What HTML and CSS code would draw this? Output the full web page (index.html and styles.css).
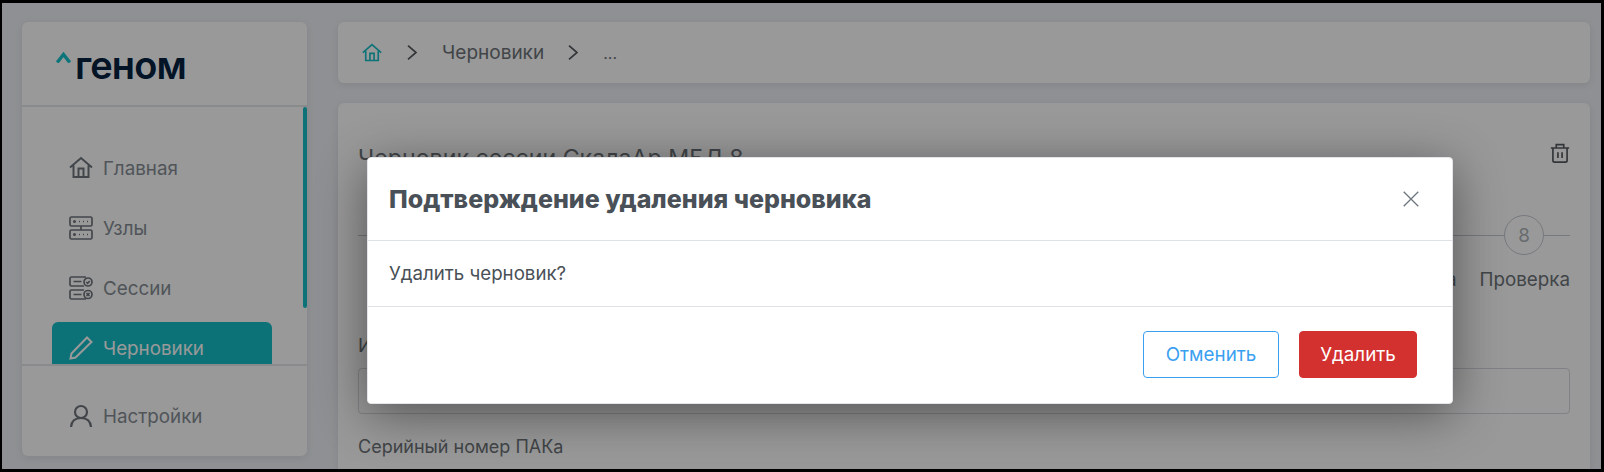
FILE: index.html
```html
<!DOCTYPE html>
<html lang="ru">
<head>
<meta charset="utf-8">
<title>Черновики</title>
<link rel="stylesheet" href="styles.css">
</head>
<body>
<div class="frame">
  <div class="app">
    <aside class="sidebar">
      <div class="logo">
        <svg class="logo-mark" width="15" height="11" viewBox="0 0 15 11"><path d="M1.200 10.500 7.500 2.500 13.800 10.500" fill="none" stroke="#17c4cc" stroke-width="3.400"/></svg>
        <span class="logo-text">геном</span>
      </div>
      <div class="nav-scroll">
        <nav class="nav">
          <a class="nav-item">
            <svg class="nav-icon" viewBox="0 0 24 24" fill="none" stroke="currentColor" stroke-width="2"><path d="M1 11.500 12 2l11 9.500M4.500 9.500v11.500h15V9.500M9.500 21v-8.500h5V21"/></svg>
            <span>Главная</span>
          </a>
          <a class="nav-item">
            <svg class="nav-icon" viewBox="0 0 24 24" fill="none" stroke="currentColor" stroke-width="1.700"><rect x="1" y="1" width="22" height="9" rx="1.500"/><rect x="1" y="14" width="22" height="9" rx="1.500"/><path d="M12 10v4"/><circle cx="5.500" cy="5.500" r="1.500" fill="currentColor" stroke="none"/><circle cx="5.500" cy="18.500" r="1.500" fill="currentColor" stroke="none"/><path d="M10 5.500h1M14 5.500h1M18 5.500h1M10 18.500h1M14 18.500h1M18 18.500h1"/></svg>
            <span>Узлы</span>
          </a>
          <a class="nav-item">
            <svg class="nav-icon" viewBox="0 0 24 24" fill="none" stroke="currentColor" stroke-width="1.700"><path d="M17 1H2.500A1.500 1.500 0 0 0 1 2.500v6A1.500 1.500 0 0 0 2.500 10H15M15 14H2.500A1.500 1.500 0 0 0 1 15.500v6A1.500 1.500 0 0 0 2.500 23H17M4.500 5.500h8M4.500 18.500h8"/><circle cx="19" cy="6" r="4"/><circle cx="19" cy="18.500" r="4"/><path d="m17.300 6 1.300 1.300 2.200-2.300M17.500 17l3 3M20.500 17l-3 3"/></svg>
            <span>Сессии</span>
          </a>
          <a class="nav-item active">
            <svg class="nav-icon" viewBox="0 0 24 24" fill="none" stroke="currentColor" stroke-width="2"><path d="M18 1.500 22.500 6 6.500 21.500 1.500 22.500 2.500 17.500Z"/></svg>
            <span>Черновики</span>
          </a>
        </nav>
        <div class="scrollbar"></div>
      </div>
      <div class="side-footer">
        <a class="nav-item">
          <svg class="nav-icon" viewBox="0 0 24 24" fill="none" stroke="currentColor" stroke-width="2.200"><circle cx="12" cy="8" r="6"/><path d="M2 23c.5-6 4-9 10-9s9.500 3 10 9"/></svg>
          <span>Настройки</span>
        </a>
      </div>
    </aside>
    <main class="content">
      <div class="crumbs">
        <svg class="crumb-home" viewBox="0 0 24 24" fill="none" stroke="currentColor" stroke-width="2"><path d="M1 11.500 12 2l11 9.500M4.500 9.500v11.500h15V9.500M9.500 21v-8.500h5V21"/></svg>
        <svg class="crumb-sep" viewBox="0 0 10 15" fill="none" stroke="currentColor" stroke-width="1.700"><path d="m1 .7 8 6.800-8 6.800"/></svg>
        <span>Черновики</span>
        <svg class="crumb-sep" viewBox="0 0 10 15" fill="none" stroke="currentColor" stroke-width="1.700"><path d="m1 .7 8 6.800-8 6.800"/></svg>
        <span class="crumb-dots">...</span>
      </div>
      <section class="card">
        <div class="card-head">
          <h1 class="card-title">Черновик сессии СкалаАр МБД.8</h1>
          <svg class="trash" viewBox="0 0 24 24" fill="none" stroke="currentColor" stroke-width="2"><path d="M1 6h22M7.500 6V2h9v4M3.500 6v15a2 2 0 0 0 2 2h13a2 2 0 0 0 2-2V6M9.500 11v7M14.500 11v7"/></svg>
        </div>
        <div class="stepper">
          <div class="step-line"></div>
          <div class="step-circle">8</div>
          <div class="step-end"></div>
        </div>
        <div class="step-labels"><span>Настройка</span><span>Проверка</span></div>
        <label class="field-label">Имя сессии</label>
        <div class="input"></div>
        <label class="field-label serial">Серийный номер ПАКа</label>
      </section>
    </main>
  </div>
  <div class="overlay"></div>
  <div class="modal">
    <div class="modal-head">
      <h2 class="modal-title">Подтверждение удаления черновика</h2>
      <svg class="close" viewBox="0 0 16 16" fill="none" stroke="currentColor" stroke-width="1.300"><path d="m.7.700 14.600 14.600M15.300.700.7 15.300"/></svg>
    </div>
    <div class="modal-body">Удалить черновик?</div>
    <div class="modal-foot">
      <button class="btn btn-cancel">Отменить</button>
      <button class="btn btn-delete">Удалить</button>
    </div>
  </div>
</div>
</body>
</html>
```
FILE: styles.css
```css
* { box-sizing: border-box; }
html, body { margin: 0; height: 100%; }
body { background: #000; font-family: Inter, "Noto Sans", sans-serif; overflow: hidden; }

.frame {
  position: relative;
  width: 1604px;
  height: 472px;
  border: solid #000;
  border-width: 3px 3px 3px 2px;
  overflow: hidden;
  background: #eff1f5;
}

.app {
  display: flex;
  gap: 31px;
  padding: 19px 11px 0 20px;
  height: 100%;
}

.sidebar {
  flex: 0 0 285px;
  height: 434px;
  display: flex;
  flex-direction: column;
  background: #fff;
  border-radius: 6px;
  box-shadow: 0 2px 8px rgba(60, 70, 90, .12);
  overflow: hidden;
}

.logo {
  flex: 0 0 85px;
  display: flex;
  align-items: flex-start;
  gap: 4px;
  padding: 23px 0 0 34px;
  border-bottom: 2px solid #e4e6ea;
}
.logo-mark { margin-top: 7px; }
.logo-text {
  font-family: Inter, sans-serif;
  font-weight: 600;
  font-size: 38px;
  line-height: 40px;
  color: #04223f;
  letter-spacing: -.9px;
}

.nav-scroll {
  flex: 0 0 257px;
  position: relative;
  overflow: hidden;
}
.nav {
  display: flex;
  flex-direction: column;
  gap: 8px;
  padding: 35px 35px 0 30px;
}
.nav-item {
  display: flex;
  align-items: center;
  gap: 10px;
  flex: 0 0 52px;
  height: 52px;
  padding-left: 17px;
  font-size: 18.800px;
  color: #858d95;
  border-radius: 6px;
}
.nav-item.active { background: #16bfc9; color: #fff; }
.nav-icon { flex: 0 0 24px; width: 24px; height: 24px; color: #6f767d; }
.nav-item.active .nav-icon { color: #fff; }
.scrollbar {
  position: absolute;
  top: 0;
  right: 0;
  width: 4px;
  height: 201px;
  background: #16bfc9;
  border-radius: 2px;
}

.side-footer {
  flex: 1;
  border-top: 2px solid #e4e6ea;
  padding: 24px 35px 0 30px;
}

.content {
  flex: 1;
  display: flex;
  flex-direction: column;
  gap: 20px;
  min-width: 0;
}

.crumbs {
  flex: 0 0 61px;
  display: flex;
  align-items: center;
  gap: 24px;
  padding: 0 24px;
  background: #fff;
  border-radius: 6px;
  box-shadow: 0 2px 8px rgba(60, 70, 90, .12);
  font-size: 19px;
  color: #6d7378;
}
.crumb-home { width: 20px; height: 20px; color: #17c0ca; margin-right: 1px; }
.crumb-sep { width: 10px; height: 15px; color: #555a5f; margin-right: 1px; }
.crumb-dots { font-size: 16px; }

.card {
  flex: 1;
  background: #fff;
  border-radius: 6px 6px 0 0;
  box-shadow: 0 2px 8px rgba(60, 70, 90, .12);
  padding: 40px 20px 0 20px;
  font-size: 18.800px;
  color: #6d7378;
}
.card-head { display: flex; justify-content: space-between; align-items: flex-start; height: 36px; }
.card-title { margin: 0; font-size: 23.200px; font-weight: 400; line-height: 30px; color: #6d7378; }
.trash { width: 20px; height: 20px; color: #555a5f; }

.stepper { display: flex; align-items: center; height: 40px; margin-top: 36px; }
.step-line { flex: 1; height: 1px; background: #c5cad0; }
.step-circle {
  flex: 0 0 40px;
  height: 40px;
  border: 1px solid #c5cad0;
  border-radius: 50%;
  display: flex;
  align-items: center;
  justify-content: center;
  font-size: 18.800px;
  color: #adb3b9;
}
.step-end { flex: 0 0 26px; height: 1px; background: #c5cad0; }
.step-labels { display: flex; justify-content: flex-end; gap: 23px; line-height: 24px; margin-top: 13px; }

.field-label { display: block; line-height: 24px; margin-top: 42px; }
.input { height: 46px; border: 1px solid #d5d9de; border-radius: 4px; margin-top: 10px; }
.field-label.serial { margin-top: 21px; font-size: 18px; }

.overlay {
  position: absolute;
  inset: 0;
  background: rgba(0, 0, 0, .4);
}

.modal {
  position: absolute;
  left: 365px;
  top: 154px;
  width: 1086px;
  height: 247px;
  display: flex;
  flex-direction: column;
  background: #fff;
  border: 1px solid #e3e5e8;
  border-radius: 4px;
  box-shadow: 0 10px 50px rgba(0, 0, 0, .45);
}
.modal-head {
  flex: 0 0 83px;
  display: flex;
  align-items: center;
  justify-content: space-between;
  padding: 0 33px 0 21px;
  border-bottom: 1px solid #dee2e6;
}
.modal-title { margin: 0; font-size: 25px; font-weight: 800; letter-spacing: 0; color: #495057; }
.close { width: 16px; height: 16px; color: #6c757d; }
.modal-body {
  flex: 0 0 66px;
  display: flex;
  align-items: center;
  padding: 0 21px;
  font-size: 18.700px;
  color: #495057;
  border-bottom: 1px solid #dee2e6;
}
.modal-foot {
  flex: 1;
  display: flex;
  justify-content: flex-end;
  align-items: flex-start;
  gap: 20px;
  padding: 24px 35px 0 0;
}
.btn {
  height: 47px;
  border-radius: 4px;
  font: 400 18.800px Inter, sans-serif;
  cursor: pointer;
}
.btn-cancel { width: 136px; background: #fff; border: 1px solid #3b9ff0; color: #3b9ff0; }
.btn-delete { width: 118px; background: #d33030; border: 1px solid #d33030; color: #fff; }
```
